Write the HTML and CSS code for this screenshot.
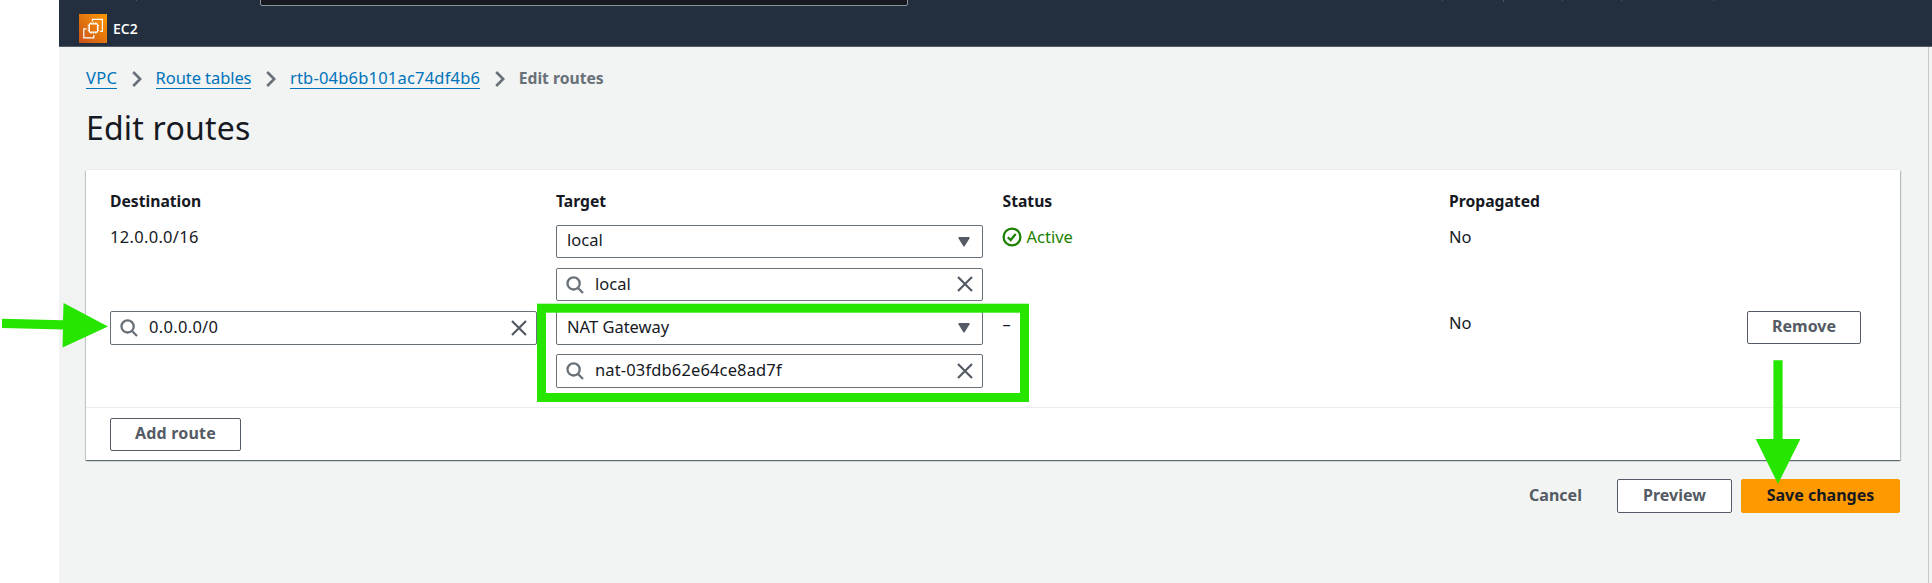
FILE: index.html
```html
<!DOCTYPE html>
<html lang="en">
<head>
<meta charset="utf-8">
<title>Edit routes</title>
<link rel="stylesheet" href="styles.css">
</head>
<body>
<svg class="sprites" aria-hidden="true">
  <symbol id="search" viewBox="0 0 18 18"><circle cx="7.6" cy="7.4" r="6.1"/><path d="M12 12l5 5"/></symbol>
  <symbol id="close" viewBox="0 0 16 16"><path d="M1 1l14 14M15 1L1 15"/></symbol>
  <symbol id="caret" viewBox="0 0 12 10"><path d="M1 .8h10L6 9z"/></symbol>
  <symbol id="chevron" viewBox="0 0 10 16"><path d="M1.2 1l7 7-7 7"/></symbol>
</svg>
<div class="console">
  <header class="topbar">
    <div class="global-search"></div>
    <i class="tick tick-a"></i><i class="tick tick-b"></i><i class="tick tick-c"></i><i class="tick tick-d"></i><i class="tick tick-e"></i><i class="tick tick-f"></i>
    <div class="service">
      <svg class="service-icon" viewBox="0 0 28 29">
        <defs><linearGradient id="g" x1="0" y1="1" x2="1" y2="0"><stop offset="0" stop-color="#c8511b"/><stop offset="1" stop-color="#f90"/></linearGradient></defs>
        <rect width="28" height="29" fill="url(#g)"/>
        <g fill="none" stroke="#fff" stroke-width="1.2">
          <rect x="10.3" y="9.8" width="8.2" height="8.4" rx=".6"/>
          <path d="M12 8.2v1.6M14.4 8.2v1.6M16.8 8.2v1.6M12 18.2v1.6M14.4 18.2v1.6M16.8 18.2v1.6M8.7 11.6h1.6M8.7 14h1.6M8.7 16.4h1.6M18.5 11.6h1.6M18.5 14h1.6M18.5 16.4h1.6"/>
          <path d="M13.4 7.4V5.3h10v12h-2.2M7.6 14.9H4.8v8.9h10v-2.9"/>
        </g>
      </svg>
      <span class="service-name">EC2</span>
    </div>
  </header>
  <main class="content">
    <nav class="crumbs">
      <a class="link vpc">VPC</a><svg class="chevron"><use href="#chevron"/></svg>
      <a class="link">Route tables</a><svg class="chevron"><use href="#chevron"/></svg>
      <a class="link id">rtb-04b6b101ac74df4b6</a><svg class="chevron"><use href="#chevron"/></svg>
      <span class="current">Edit routes</span>
    </nav>
    <h1 class="title">Edit routes</h1>
    <section class="panel">
      <div class="routes">
        <div class="row head"><span>Destination</span><span>Target</span><span>Status</span><span>Propagated</span></div>
        <div class="row">
          <div class="cidr">12.0.0.0/16</div>
          <div class="fields">
            <div class="field"><span class="value">local</span><svg class="caret"><use href="#caret"/></svg></div>
            <div class="field"><svg class="search"><use href="#search"/></svg><span class="value value-low">local</span><svg class="close"><use href="#close"/></svg></div>
          </div>
          <div class="status"><svg class="check" viewBox="0 0 20 20"><circle cx="10" cy="10" r="8.4"/><path d="M5.8 10.2l2.9 2.9 5-6.1"/></svg>Active</div>
          <div>No</div>
        </div>
        <div class="row row-edit">
          <div class="fields"><div class="field"><svg class="search"><use href="#search"/></svg><span class="value cidr">0.0.0.0/0</span><svg class="close"><use href="#close"/></svg></div></div>
          <div class="fields">
            <div class="field"><span class="value">NAT Gateway</span><svg class="caret"><use href="#caret"/></svg></div>
            <div class="field"><svg class="search"><use href="#search"/></svg><span class="value id-nat">nat-03fdb62e64ce8ad7f</span><svg class="close"><use href="#close"/></svg></div>
          </div>
          <div class="none">–</div>
          <div class="last"><span>No</span><button class="btn remove">Remove</button></div>
        </div>
      </div>
      <div class="panel-footer"><button class="btn add">Add route</button></div>
    </section>
    <div class="actions">
      <button class="btn cancel">Cancel</button>
      <button class="btn preview">Preview</button>
      <button class="btn primary">Save changes</button>
    </div>
  </main>
</div>
<svg class="annotations" viewBox="0 0 1932 583">
  <path d="M2 318.8l61 1.4.6-17.2L108 326.6 62.6 347.6l.3-18L2 328z"/>
  <path d="M1773.4 360.3h9.2V439h17.8L1778 484l-22.3-45h17.7z"/>
  <rect x="541.5" y="308.2" width="483" height="89.3"/>
</svg>
</body>
</html>
```
FILE: styles.css
```css
* { box-sizing: border-box; }

body {
  margin: 0;
  height: 583px;
  overflow: hidden;
  position: relative;
  background: #fff;
  color: #16191f;
  font: 16.5px/24px "Noto Sans", "Open Sans", sans-serif;
}

svg { display: block; flex: none; }
.sprites { position: absolute; width: 0; height: 0; }

.console {
  margin-left: 59px;
  height: 583px;
  background: #f2f3f3;
}

.topbar {
  position: relative;
  height: 47px;
  padding: 14px 20px 0;
  background: #232f3e;
  border-bottom: 1px solid #545b64;
}

.global-search {
  position: absolute;
  left: 201px;
  top: -20px;
  width: 648px;
  height: 26px;
  background: #16191f;
  border: 1px solid #87959b;
  border-radius: 2px;
}

.tick { position: absolute; top: 0; width: 1px; height: 1px; background: #4b5664; }
.tick-a { left: 77px; }
.tick-b { left: 1383px; }
.tick-c { left: 1444px; height: 2px; }
.tick-d { left: 1503px; }
.tick-e { left: 1562px; }
.tick-f { left: 1654px; }

.service { display: flex; gap: 6px; }
.service-icon { width: 28px; height: 29px; }
.service-name {
  color: #fff;
  font: 600 14px/29px "Open Sans", sans-serif;
}

.content {
  height: 536px;
  margin-right: 3px;
  padding: 19px 28px 0 27px;
  border-right: 1px solid #c3c9cb;
}

.crumbs { display: flex; height: 24px; }
.link {
  height: 23px;
  color: #0073bb;
  border-bottom: 1px solid #0073bb;
  letter-spacing: -.08px;
}
.link.vpc { letter-spacing: .25px; }
.link.id { letter-spacing: .2px; }
.chevron {
  width: 10px;
  height: 16px;
  margin: 5px 14px 0 14.5px;
  fill: none;
  stroke: #687078;
  stroke-width: 2.6;
}
.current { color: #687078; font-weight: 700; font-size: 15.7px; }

.title { margin: 18px 0 22px; font: 400 32px/40px "Noto Sans", "Open Sans", sans-serif; letter-spacing: .2px; }

.panel {
  height: 290px;
  margin-bottom: 19px;
  background: #fff;
  box-shadow: 0 1px 1px 0 rgba(0, 28, 36, .45), 1px 1px 1px 0 rgba(0, 28, 36, .2), -1px 1px 1px 0 rgba(0, 28, 36, .15), 0 -1px 0 0 #eaeded;
}

.routes { padding: 19px 0 19px 24px; border-bottom: 1px solid #eaeded; }
.row {
  display: grid;
  grid-template-columns: 446px 446.5px 446.5px 1fr;
  height: 86px;
}
.row.head { height: 36px; font-weight: 700; font-size: 15.7px; }
.row.row-edit { height: 77px; }
.cidr { letter-spacing: .3px; }
.none { padding-top: 1px; }

.fields { width: 427px; display: flex; flex-direction: column; gap: 10px; }
.row-edit .fields { gap: 9px; }
.field {
  display: flex;
  align-items: center;
  height: 33px;
  padding: 0 9px 0 10px;
  border: 1px solid #687078;
  border-radius: 2px;
}
.row-edit .field { height: 34px; }
.value { flex: 1; margin-top: -3px; }
.value-low { margin-top: -1px; }
.id-nat { letter-spacing: .14px; }
.search { width: 18px; height: 18px; margin: 0 11px 0 -1px; fill: none; stroke: #687078; stroke-width: 2.3; }
.close { width: 16px; height: 16px; margin-top: -1px; fill: none; stroke: #545b64; stroke-width: 2.2; }
.caret { width: 12px; height: 10px; margin-right: 3px; fill: #545b64; stroke: #545b64; stroke-width: 1.4; stroke-linejoin: round; }

.status { display: flex; gap: 5px; margin-left: -1px; color: #1d8102; }
.check { width: 20px; height: 20px; margin-top: 2px; fill: none; stroke: #1d8102; stroke-width: 2.3; }

.last { display: flex; justify-content: space-between; padding-right: 39px; }

.btn {
  height: 33px;
  padding: 0 0 3px;
  color: #545b64;
  background: #fff;
  border: 1px solid #545b64;
  border-radius: 2px;
  font: 700 16px/24px "Noto Sans", "Open Sans", sans-serif;
}
.remove { width: 114px; }
.add { width: 131px; letter-spacing: .2px; }

.panel-footer { padding: 10px 24px; }

.actions { display: flex; justify-content: flex-end; }
.actions .btn { height: 34px; }
.actions .cancel { width: 105px; margin-right: 9px; background: none; border-color: transparent; }
.actions .preview { width: 115px; margin-right: 9px; }
.actions .primary { width: 159px; color: #16191f; background: #f90; border-color: #f90; }

.annotations {
  position: absolute;
  left: 0;
  top: 0;
  width: 1932px;
  height: 583px;
  fill: #26e600;
  pointer-events: none;
}
.annotations rect { fill: none; stroke: #26e600; stroke-width: 9; }
```
